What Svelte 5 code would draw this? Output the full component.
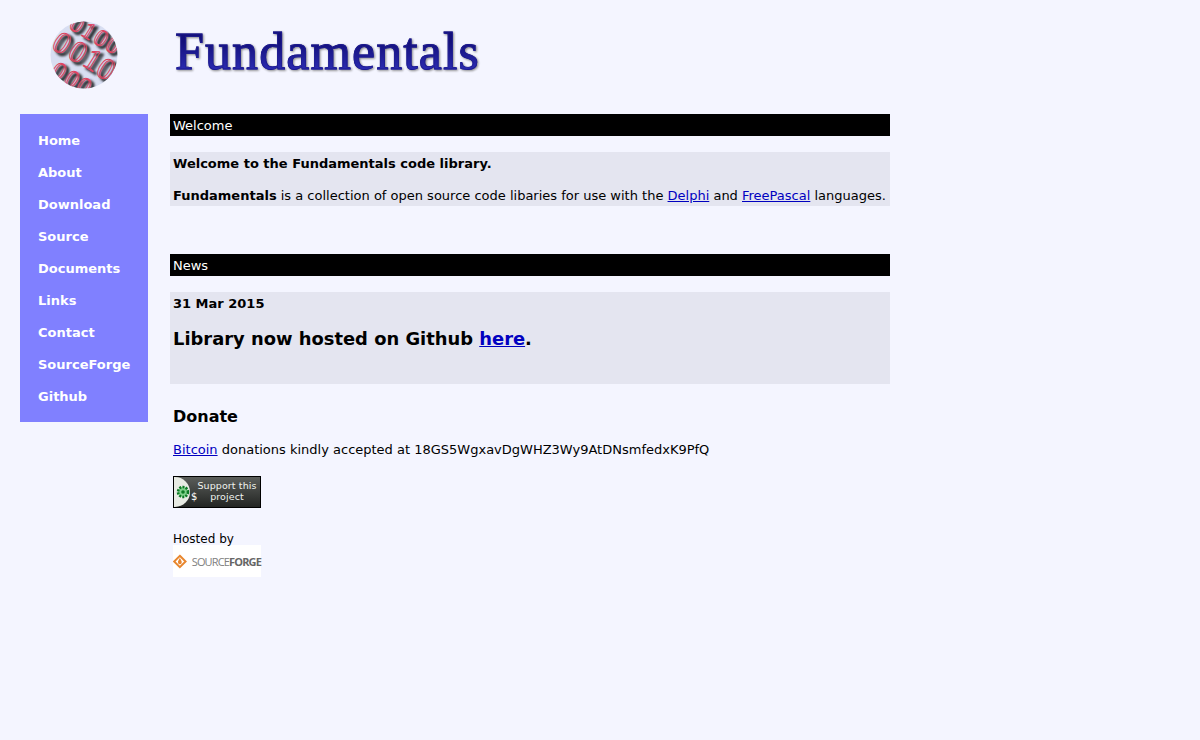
<script>
	let links = ['Home', 'About', 'Download', 'Source', 'Documents', 'Links', 'Contact', 'SourceForge', 'Github']

	// digits on the logo disc: [digit, x, y, size]
	let digits = [
		['0', 27, 3, 24], ['1', 39, 10, 24], ['0', 51, 17, 24], ['0', 63, 24, 24],
		['0', 12, 22, 31], ['0', 28, 31, 31], ['1', 43, 39, 31], ['0', 56, 48, 31],
		['0', 9, 50, 25], ['0', 22, 58, 25], ['0', 34, 65, 25]
	]
</script>

<div class="page">
	<header>
		<div class="logo">
			<svg width="68" height="68" viewBox="0 0 68 68">
				<defs>
					<clipPath id="disc"><circle cx="34" cy="34" r="33.5" /></clipPath>
					<filter id="soft"><feGaussianBlur stdDeviation="1" /></filter>
				</defs>
				<circle cx="34" cy="34" r="33.5" fill="#d8def2" />
				<g clip-path="url(#disc)" font-family="'Liberation Serif', serif" text-anchor="middle">
					<g fill="none" stroke="#2e3136" stroke-width="2" filter="url(#soft)">
						{#each digits as [d, x, y, s]}
							<text transform="translate({x + 3} {y + 2.5}) rotate(32)" y={s * 0.33} font-size={s}>{d}</text>
						{/each}
					</g>
					<g fill="none" stroke="#dc4460" stroke-width="1">
						{#each digits as [d, x, y, s]}
							<text transform="translate({x} {y}) rotate(32)" y={s * 0.33} font-size={s}>{d}</text>
						{/each}
					</g>
				</g>
			</svg>
		</div>
		<h1>Fundamentals</h1>
	</header>

	<div class="body">
		<nav>
			{#each links as link}
				<a href="#top">{link}</a>
			{/each}
		</nav>

		<main>
			<h2 class="bar">Welcome</h2>
			<section class="box welcome">
				<p><b>Welcome to the Fundamentals code library.</b></p>
				<p><b>Fundamentals</b> is a collection of open source code libaries for use with the <a href="#top">Delphi</a> and <a href="#top">FreePascal</a> languages.</p>
			</section>

			<h2 class="bar news">News</h2>
			<section class="box newsbox">
				<p><b>31 Mar 2015</b></p>
				<p class="big"><b>Library now hosted on Github <a href="#top">here</a>.</b></p>
			</section>

			<div class="donate">
				<h3>Donate</h3>
				<p><a href="#top">Bitcoin</a> donations kindly accepted at 18GS5WgxavDgWHZ3Wy9AtDNsmfedxK9PfQ</p>

				<a class="support" href="#top">
					<span class="cap">
						<svg width="18" height="30" viewBox="0 0 18 30">
							<circle cx="9" cy="15" r="5" fill="#7fd08a" stroke="#0c7a24" stroke-width="2.6" stroke-dasharray="2 1.2" />
							<circle cx="9" cy="15" r="1.8" fill="#0c7a24" />
						</svg>
					</span>
					<span class="dollar">$</span>
					<span class="label">Support this<br />project</span>
				</a>

				<p class="hosted">Hosted by</p>
				<div class="sf">
					<svg width="17" height="17" viewBox="0 0 18 18">
						<path d="M9 1.5 L16.5 9 L9 16.5 L1.5 9 Z" fill="none" stroke="#e8862e" stroke-width="2.6" />
						<path d="M9 4.5 C10.5 7 11.5 8.5 11.5 10 A2.5 2.5 0 0 1 6.5 10 C6.5 8.5 7.5 7 9 4.5 Z" fill="#e8862e" />
					</svg>
					<span class="sfname">SOURCE<b>FORGE</b></span>
				</div>
			</div>
		</main>
	</div>
</div>

<style>
	:global(body) {
		background: #f4f5ff;
		font-family: "DejaVu Sans", Verdana, sans-serif;
		font-size: 13px;
		color: #000;
	}
	.page {
		height: 740px;
		overflow: hidden;
	}
	header {
		display: flex;
		height: 114px;
	}
	.logo {
		width: 168px;
		padding: 21px 0 0 50px;
		box-sizing: border-box;
	}
	h1 {
		margin: 24px 0 0 7px;
		height: 60px;
		font-family: "Liberation Serif", serif;
		font-weight: 400;
		font-size: 52px;
		letter-spacing: 1.1px;
		line-height: 56px;
		color: transparent;
		background: linear-gradient(#14107a 30%, #2a2ab0 75%);
		-webkit-background-clip: text;
		background-clip: text;
		-webkit-text-stroke: 0.8px #1c1a90;
		filter: drop-shadow(1.5px 1.5px 1px #888);
	}
	.body {
		display: flex;
		align-items: flex-start;
		padding-left: 20px;
		gap: 22px;
	}
	nav {
		width: 128px;
		box-sizing: border-box;
		background: #8080ff;
		padding: 11px 0 9px 18px;
		display: flex;
		flex-direction: column;
	}
	nav a {
		color: #fff;
		font-weight: 700;
		text-decoration: none;
		line-height: 32px;
		height: 32px;
	}
	main {
		width: 720px;
	}
	p {
		margin: 0;
	}
	a {
		color: #0000c0;
	}
	.bar {
		margin: 0;
		background: #000;
		color: #fff;
		font-size: 13px;
		font-weight: 400;
		height: 22px;
		line-height: 23px;
		padding-left: 3px;
	}
	.news {
		margin-top: 48px;
	}
	.box {
		margin-top: 16px;
		background: #e4e5f0;
		padding: 1px 3px 0;
		box-sizing: border-box;
		line-height: 22px;
	}
	.welcome {
		height: 54px;
		display: flex;
		flex-direction: column;
		gap: 10px;
	}
	.newsbox {
		height: 92px;
	}
	.big {
		font-size: 17.9px;
		margin-top: 13px;
	}
	.donate {
		padding: 21px 3px 0;
	}
	h3 {
		margin: 0;
		font-size: 16px;
		font-weight: 700;
		line-height: 24px;
	}
	.donate > p {
		line-height: 22px;
	}
	h3 + p {
		margin-top: 10px;
	}
	.support {
		margin-top: 15px;
		display: flex;
		position: relative;
		width: 88px;
		height: 32px;
		box-sizing: border-box;
		border: 1px solid #000;
		background: linear-gradient(#5a5d5a, #232523);
		text-decoration: none;
	}
	.cap {
		width: 16px;
		height: 30px;
		background: #e8ebe4;
		border-radius: 0 15px 15px 0;
	}
	.dollar {
		position: absolute;
		left: 17px;
		top: 13px;
		color: #fff;
		font-size: 10px;
		line-height: 14px;
	}
	.label {
		flex: 1;
		color: #f0f4f0;
		font-size: 9.5px;
		line-height: 11px;
		text-align: center;
		padding: 3px 0 0 4px;
		letter-spacing: 0.1px;
		white-space: nowrap;
	}
	.hosted {
		margin-top: 20px;
		font-size: 12px;
	}
	.sf {
		width: 88px;
		height: 32px;
		background: #fff;
		display: flex;
		align-items: center;
		gap: 5px;
		margin-top: -5px;
	}
	.sfname {
		font-family: "Open Sans", sans-serif;
		font-size: 11px;
		letter-spacing: -0.85px;
		color: #808080;
		white-space: nowrap;
	}
	.sfname b {
		color: #666;
	}
</style>
